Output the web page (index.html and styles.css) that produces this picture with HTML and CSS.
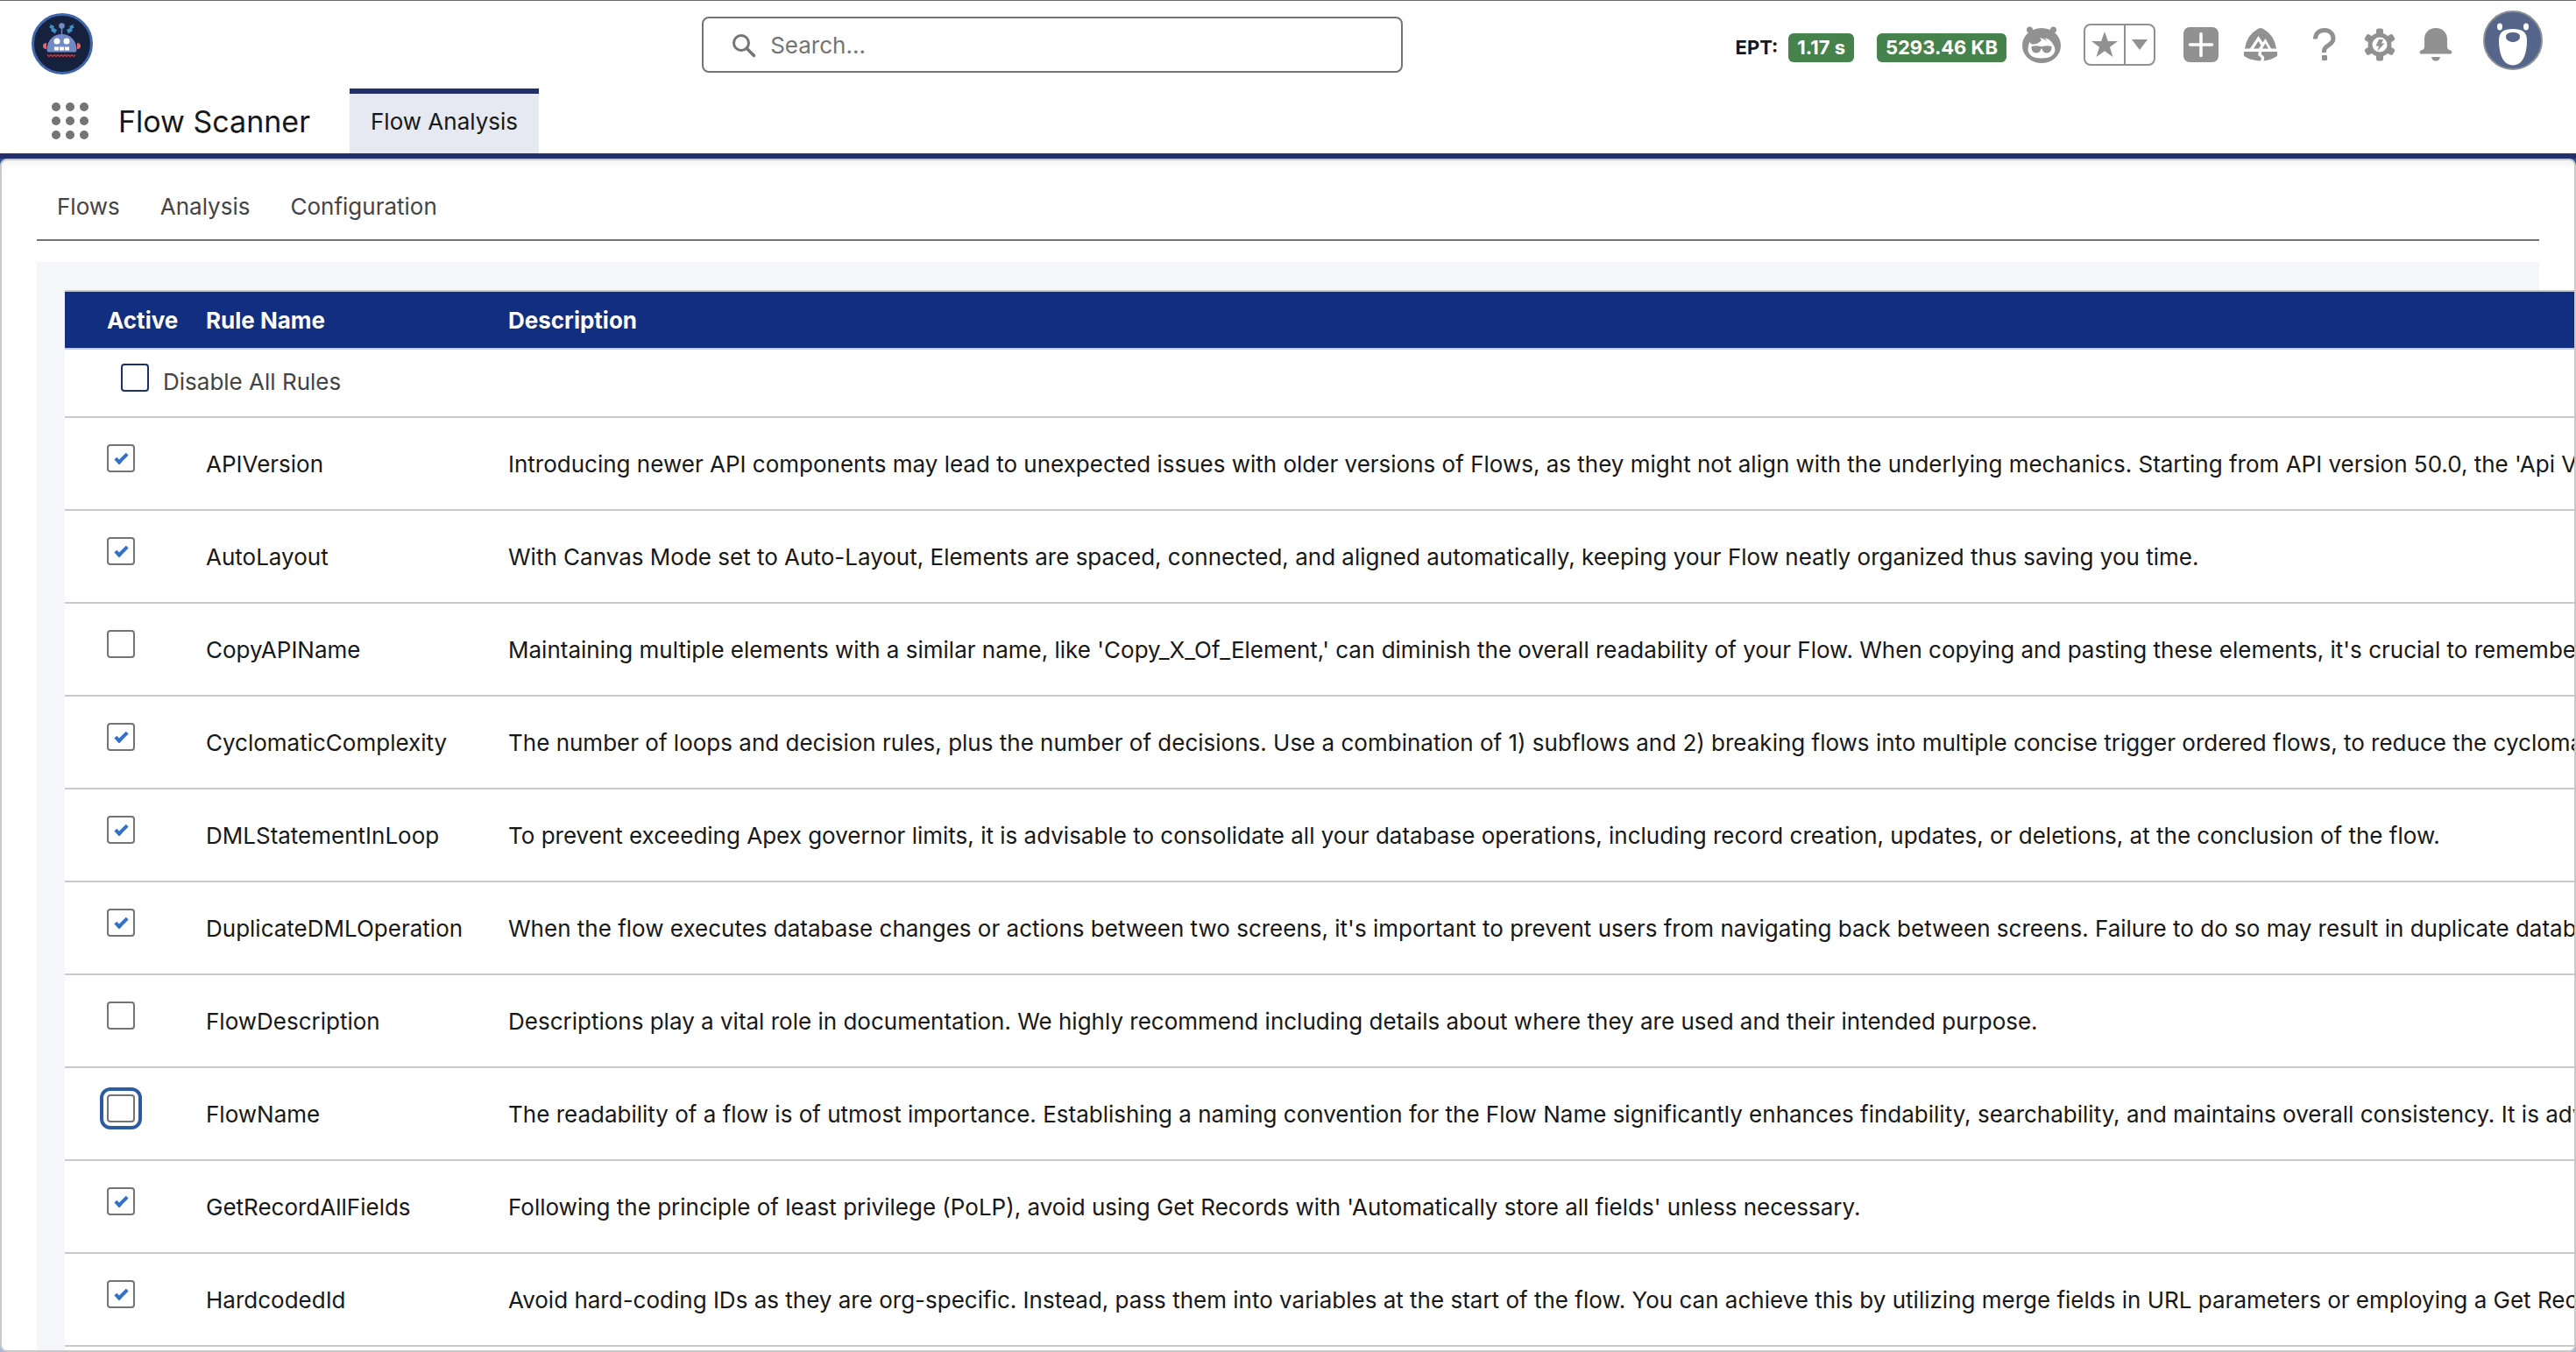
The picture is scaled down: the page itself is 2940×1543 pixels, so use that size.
FILE: index.html
```html
<!DOCTYPE html>
<html lang="en">
<head>
<meta charset="utf-8">
<title>Flow Scanner</title>
<link rel="stylesheet" href="styles.css">
</head>
<body>
<header class="top">
  <a class="logo" href="#" aria-label="Home">
    <svg viewBox="0 0 70 70" width="70" height="70">
      <circle cx="35" cy="35" r="33.5" fill="#16213d" stroke="#3d66ac" stroke-width="3"/>
      <path d="M20 12l6 3-1 2 4 2-2 4 1 1-6-4 1-2-3-2 2-2z M49 12l-6 3 1 2-4 2 2 4-1 1 6-4-1-2 3-2-2-2z" fill="#3f8fc8"/>
      <path d="M34.500 14v12" stroke="#7389c6" stroke-width="1.5"/>
      <circle cx="34.500" cy="14.500" r="3.300" fill="#7389c6"/>
      <path d="M17 34q-4 0-4 3.500t4 3.500zM52 34q4 0 4 3.500t-4 3.500z" fill="#e0686b"/>
      <path d="M17.500 42C17.500 31 25 24 34.500 24S51.500 31 51.500 42q0 2.500-2 2.500H19.500q-2 0-2-2.500z" fill="#7389c6"/>
      <circle cx="29" cy="32" r="3.500" fill="#fff"/><circle cx="40" cy="32" r="3.500" fill="#fff"/>
      <path d="M26 38.500h5v4h-5zM32 38.500h5v4h-5zM38 38.500h5v4h-5z" fill="#fff"/>
      <path d="M18 47.500l2 2 2-2 2 2 2-2 2 2 2-2 2 2 2-2 2 2 2-2 2 2 2-2 2 2 2-2 2 2 2-2" fill="none" stroke="#c5343a" stroke-width="1.500"/>
    </svg>
  </a>
  <label class="search">
    <svg viewBox="0 0 28 28" width="28" height="28"><circle cx="11" cy="11" r="8.500" fill="none" stroke="#747474" stroke-width="3"/><path d="M17 17l8.500 8.500" stroke="#747474" stroke-width="3.500" stroke-linecap="round"/></svg>
    <input type="search" placeholder="Search..." aria-label="Search">
  </label>
  <div class="tools">
    <div class="ept"><span>EPT:</span><span class="badge">1.17 s</span><span class="badge badge-size">5293.46 KB</span></div>
    <button class="tool astro" aria-label="Assistant">
      <svg viewBox="0 0 44 44" width="44" height="44" fill="#919191">
        <circle cx="8.500" cy="5" r="3.500"/><circle cx="35.500" cy="5" r="3.500"/>
        <ellipse cx="22" cy="23" rx="22" ry="20"/>
        <path d="M8.500 18.500q1 3.500 4 3 5 0 9.500-4.500l-2-3q5 1 8 4l-2-4q5 1.500 7.500 5l2 3q2 3 2 6-1.500 9.500-15.500 9.500T6.500 28q0-5 2-9.500z" fill="#fff"/>
        <path d="M10.500 24q5.500-1.500 10.500 0h2q5-1.500 10.500 0 .5 7-5 7.500-5 0-6-5h-1q-1 5-6 5-5.500-.5-5-7.500z"/>
      </svg>
    </button>
    <div class="fav">
      <button aria-label="Favorite"><svg viewBox="0 0 30 30" width="30" height="30"><path d="M15 0l3.900 11H30l-9 6.800L24.400 29 15 22.300 5.600 29 9 17.800 0 11h11.100z" fill="#919191"/></svg></button>
      <button aria-label="Favorites list"><svg viewBox="0 0 18 12" width="18" height="12"><path d="M0 0h18L9 12z" fill="#919191"/></svg></button>
    </div>
    <button class="tool plus" aria-label="Create"><svg viewBox="0 0 40 40" width="40" height="40"><rect width="40" height="40" rx="7" fill="#919191"/><path d="M20 7.500v25M7.500 20h25" stroke="#fff" stroke-width="3.500" stroke-linecap="round"/></svg></button>
    <button class="tool trail" aria-label="Guidance"><svg viewBox="0 0 38 38" width="38" height="38"><path d="M16 1q3-2 6 0 13 7 15 22.500h-6L24.500 12l-3 4.500L16.500 9 7 23.500H1Q3 8 16 1z" fill="#919191"/><path d="M11 23.500l5.500-8.500 3 4.500-2.500 4zM21 23.500l3.500-6 3.500 6z" fill="#919191"/><path d="M0 27h17q-2 4 1 5.500 3 1 1 5Q8 37 1 32.500q-1-.5-1-1.500zM20.500 27H38v4q0 1-1 1.500-6 4-14.500 5 2-5-1.500-6.500-2-1-.5-4z" fill="#919191"/></svg></button>
    <button class="tool help" aria-label="Help"><svg viewBox="0 0 26 38" width="26" height="38"><path d="M2.500 12.500C2.500 6 7 2.500 13 2.500s10 4 10 9.500c0 8-10.500 7-10.500 14v2" fill="none" stroke="#919191" stroke-width="5"/><rect x="10" y="31" width="6" height="6" rx="1" fill="#919191"/></svg></button>
    <button class="tool gear" aria-label="Setup"><svg viewBox="-19 -19 38 38" width="38" height="38"><g fill="#919191"><circle r="13.500"/><rect x="-4" y="-18.500" width="8" height="37" rx="2.500"/><rect x="-4" y="-18.500" width="8" height="37" rx="2.500" transform="rotate(60)"/><rect x="-4" y="-18.500" width="8" height="37" rx="2.500" transform="rotate(120)"/></g><circle r="8.500" fill="#fff"/><path d="M-1-6h5L2-1.500H5.500L-2.500 7l1.500-5.500H-4.500z" fill="#919191"/></svg></button>
    <button class="tool bell" aria-label="Notifications"><svg viewBox="0 0 38 38" width="38" height="38"><path d="M19 0c8 0 13 5.500 13 12.500v9q0 3 4 4 1.500 1 1.500 2.500-.5 1.500-2 1.500h-33q-1.500 0-2-1.500 0-1.500 1.500-2.500 4-1 4-4v-9C6 5.500 11 0 19 0zM14 33h10q-1 4.500-5 4.500T14 33z" fill="#919191"/></svg></button>
    <button class="tool avatar" aria-label="Profile"><svg viewBox="0 0 68 68" width="68" height="68"><circle cx="34" cy="34" r="33" fill="#56668a" stroke="#8b8f96" stroke-width="2"/><ellipse cx="19" cy="18.500" rx="3" ry="4" fill="#fff"/><ellipse cx="49" cy="18.500" rx="3" ry="4" fill="#fff"/><path d="M34 21c10 0 16 3 16 13 0 14-4 28.500-16 28.500S18 48 18 34c0-10 6-13 16-13z" fill="#fff"/><path d="M34 25c5 0 8 1.500 8 5s-4 6-8 6-8-2.500-8-6 3-5 8-5z" fill="#56668a"/></svg></button>
  </div>
</header>
<nav class="appnav">
  <button class="waffle" aria-label="App launcher"><i></i><i></i><i></i><i></i><i></i><i></i><i></i><i></i><i></i></button>
  <span class="appname">Flow Scanner</span>
  <a class="apptab" href="#">Flow Analysis</a>
</nav>
<main class="panel">
  <nav class="tabs"><a href="#">Flows</a><a href="#">Analysis</a><a href="#">Configuration</a></nav>
  <section class="content">
    <table class="rules">
      <thead><tr><th>Active</th><th>Rule Name</th><th>Description</th></tr></thead>
      <tbody>
        <tr class="all"><td colspan="3"><label><input type="checkbox" class="check">Disable All Rules</label></td></tr>
        <tr><td><input type="checkbox" class="check" aria-labelledby="r1" checked></td><td id="r1">APIVersion</td><td>Introducing newer API components may lead to unexpected issues with older versions of Flows, as they might not align with the underlying mechanics. Starting from API version 50.0, the 'Api Vers</td></tr>
        <tr><td><input type="checkbox" class="check" aria-labelledby="r2" checked></td><td id="r2">AutoLayout</td><td>With Canvas Mode set to Auto-Layout, Elements are spaced, connected, and aligned automatically, keeping your Flow neatly organized thus saving you time.</td></tr>
        <tr><td><input type="checkbox" class="check" aria-labelledby="r3"></td><td id="r3">CopyAPIName</td><td>Maintaining multiple elements with a similar name, like 'Copy_X_Of_Element,' can diminish the overall readability of your Flow. When copying and pasting these elements, it's crucial to remember t</td></tr>
        <tr><td><input type="checkbox" class="check" aria-labelledby="r4" checked></td><td id="r4">CyclomaticComplexity</td><td>The number of loops and decision rules, plus the number of decisions. Use a combination of 1) subflows and 2) breaking flows into multiple concise trigger ordered flows, to reduce the cyclomatic</td></tr>
        <tr><td><input type="checkbox" class="check" aria-labelledby="r5" checked></td><td id="r5">DMLStatementInLoop</td><td>To prevent exceeding Apex governor limits, it is advisable to consolidate all your database operations, including record creation, updates, or deletions, at the conclusion of the flow.</td></tr>
        <tr><td><input type="checkbox" class="check" aria-labelledby="r6" checked></td><td id="r6">DuplicateDMLOperation</td><td>When the flow executes database changes or actions between two screens, it's important to prevent users from navigating back between screens. Failure to do so may result in duplicate database</td></tr>
        <tr><td><input type="checkbox" class="check" aria-labelledby="r7"></td><td id="r7">FlowDescription</td><td>Descriptions play a vital role in documentation. We highly recommend including details about where they are used and their intended purpose.</td></tr>
        <tr><td><input type="checkbox" class="check focused" aria-labelledby="r8"></td><td id="r8">FlowName</td><td>The readability of a flow is of utmost importance. Establishing a naming convention for the Flow Name significantly enhances findability, searchability, and maintains overall consistency. It is advisa</td></tr>
        <tr><td><input type="checkbox" class="check" aria-labelledby="r9" checked></td><td id="r9">GetRecordAllFields</td><td>Following the principle of least privilege (PoLP), avoid using Get Records with 'Automatically store all fields' unless necessary.</td></tr>
        <tr><td><input type="checkbox" class="check" aria-labelledby="r10" checked></td><td id="r10">HardcodedId</td><td>Avoid hard-coding IDs as they are org-specific. Instead, pass them into variables at the start of the flow. You can achieve this by utilizing merge fields in URL parameters or employing a Get Record</td></tr>
        <tr><td></td><td></td><td></td></tr>
      </tbody>
    </table>
  </section>
</main>
</body>
</html>
```
FILE: styles.css
```css
*, *::before { box-sizing: border-box; }
body {
  margin: 0;
  height: 100vh;
  display: flex;
  flex-direction: column;
  overflow: hidden;
  background: linear-gradient(#2e5596 30%, #a9b7d2);
  color: #181818;
  font: 26px/36px Inter, "Liberation Sans", sans-serif;
}
button { padding: 0; border: 0; background: none; display: grid; place-items: center; }
svg { display: block; }
a { color: inherit; text-decoration: none; }

.top {
  flex: none;
  height: 101px;
  border-top: 1px solid #6b6b6b;
  padding: 0 38px 0 36px;
  display: grid;
  grid-template-columns: 10fr 800px 17fr;
  align-items: start;
  background: #fff;
}
.logo { margin-top: 14px; }
.search {
  margin-top: 18px;
  height: 64px;
  border: 2px solid #747474;
  border-radius: 8px;
  padding: 2px 0 0 32px;
  display: flex;
  align-items: center;
  gap: 16px;
}
.search input { flex: 1; border: 0; outline: 0; padding: 0; font: inherit; background: none; }
.search input::placeholder { color: #747474; opacity: 1; }

.tools { display: flex; justify-content: flex-end; align-items: center; height: 100px; }
.ept { display: flex; align-items: center; padding-top: 6px; font-size: 22px; line-height: 33px; font-weight: 700; white-space: nowrap; }
.badge { margin-left: 12px; padding: 0 10px; border-radius: 6px; background: #45824c; color: #fff; }
.badge-size { margin-left: 26px; }
.astro { margin-left: 18px; }
.fav { margin-left: 26px; display: grid; grid-template-columns: 44px 34px; height: 48px; border: 2px solid #919191; border-radius: 8px; }
.fav button + button { border-left: 2px solid #919191; }
.plus { margin-left: 32px; }
.trail { margin-left: 29px; }
.help { margin-left: 41px; }
.gear { margin-left: 31px; }
.bell { margin-left: 26px; }
.avatar { margin: 0 0 10px 35px; }

.appnav {
  flex: none;
  display: flex;
  align-items: stretch;
  height: 80px;
  border-bottom: 6px solid #222f6a;
  padding-left: 59px;
  background: #fff;
}
.waffle { align-self: center; grid-template-columns: repeat(3, 10px); gap: 6px; }
.waffle i { width: 10px; height: 10px; border-radius: 50%; background: #747474; }
.appname { margin-left: 34px; width: 264px; font-size: 34px; line-height: 76px; }
.apptab { border-top: 6px solid #222f6a; background: #e6e9f1; padding: 0 24px; line-height: 64px; }

.panel {
  flex: 1;
  min-height: 0;
  overflow: hidden;
  border: 2px solid #c9c9c9;
  border-radius: 8px;
  padding: 16px 40px 0;
  background: linear-gradient(#f3f3f3, #fff 10px);
}
.tabs { display: flex; gap: 46px; height: 76px; padding-left: 23px; border-bottom: 2px solid #747474; line-height: 74px; color: #444; }
.content { margin-top: 24px; padding: 32px; background: #f4f6fa; }
.rules { border-collapse: separate; border-spacing: 0; table-layout: fixed; width: 3600px; background: #fff; }
th { height: 68px; padding: 2px 0 0; border-top: 2px solid #c3cbdb; border-bottom: 2px solid #c3cbdb; background: #112e80; color: #fff; text-align: left; font-weight: 700; }
th:first-child { width: 161px; padding-left: 48px; }
th:nth-child(2) { width: 345px; }
td { height: 106px; padding: 2px 0 0; border-bottom: 2px solid #c9c9c9; white-space: nowrap; }
td:first-child { padding-left: 48px; }
.all td { height: 78px; padding: 0 0 2px; color: #444; }
.all td:first-child { padding-left: 64px; }
.all label { display: flex; gap: 16px; line-height: 42px; }
.check {
  appearance: none;
  display: block;
  width: 32px;
  height: 32px;
  margin: 0 0 14px;
  border: 2px solid #747474;
  border-radius: 4px;
  background: #fff;
}
.all .check { border-color: #1b3070; margin: 0; }
.check:checked::before {
  content: "";
  display: block;
  width: 15px;
  height: 8px;
  margin: 9px 0 0 7px;
  border: solid #3470c9;
  border-width: 0 0 4px 4px;
  transform: rotate(-45deg);
}
.focused { outline: 4px solid #2b5ca3; outline-offset: 4px; }
```
